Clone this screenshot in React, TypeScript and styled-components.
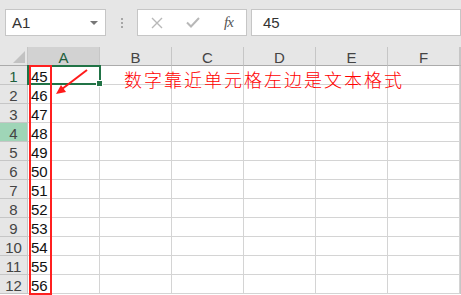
import React from 'react'
import styled, { createGlobalStyle } from 'styled-components'

const GlobalStyle = createGlobalStyle`
  html, body {
    margin: 0;
    padding: 0;
    background: #ffffff;
    overflow: hidden;
  }
  body {
    font-family: "Liberation Sans", Arial, sans-serif;
  }
`

const Page = styled.div`
  width: 461px;
  height: 295px;
  overflow: hidden;
  background: #ffffff;
`

const Toolbar = styled.div`
  height: 47px;
  box-sizing: border-box;
  padding: 9px 0 0 5px;
  background: #e6e6e6;
  display: flex;
  align-items: flex-start;
`

const Box = styled.div<{ $w?: number; $grow?: boolean }>`
  height: 27px;
  box-sizing: border-box;
  background: #ffffff;
  border: 1px solid #c6c6c6;
  display: flex;
  align-items: center;
  width: ${p => (p.$w ? `${p.$w}px` : 'auto')};
  flex: ${p => (p.$grow ? '1' : 'none')};
`

const NameText = styled.span`
  font-size: 15px;
  color: #333;
  padding-left: 6px;
  flex: 1;
`

const Caret = styled.span`
  width: 0;
  height: 0;
  border-left: 4px solid transparent;
  border-right: 4px solid transparent;
  border-top: 4px solid #777;
  margin-right: 7px;
  margin-top: 1px;
`

const Dots = styled.div`
  width: 31px;
  height: 27px;
  display: flex;
  flex-direction: column;
  align-items: center;
  justify-content: center;
  gap: 2px;

  span {
    width: 2px;
    height: 2px;
    background: #a6a6a6;
  }
`

const FxButtons = styled(Box)`
  margin-right: 4px;
  padding-left: 13px;
`

const IconSlot = styled.span<{ $w: number }>`
  width: ${p => p.$w}px;
  display: flex;
  align-items: center;
`

const Fx = styled.span`
  font-family: "Liberation Serif", serif;
  font-style: italic;
  font-size: 15px;
  color: #555;
  letter-spacing: -1px;
`

const FormulaText = styled.span`
  font-size: 15px;
  color: #333;
  padding-left: 11px;
`

const Grid = styled.div`
  position: relative;
  display: grid;
  grid-template-columns: 28px repeat(6, 72px) 1fr;
  grid-auto-rows: 19px;
`

const Corner = styled.div`
  background: #e6e6e6;
  border-right: 1px solid #c6c6c6;
  border-bottom: 1px solid #ababab;
  box-sizing: border-box;
  position: relative;

  &::after {
    content: '';
    position: absolute;
    right: 2px;
    bottom: 2px;
    width: 0;
    height: 0;
    border-left: 12px solid transparent;
    border-bottom: 12px solid #c2c2c2;
  }
`

const ColHead = styled.div<{ $active?: boolean }>`
  box-sizing: border-box;
  background: ${p => (p.$active ? '#d2d2d2' : '#e6e6e6')};
  border-right: 1px solid #c6c6c6;
  border-bottom: 1px solid #ababab;
  text-align: center;
  font-size: 15px;
  line-height: 15px;
  padding-top: 3px;
  color: ${p => (p.$active ? '#1e5e3c' : '#444')};
`

const RowHead = styled.div<{ $tone?: 'sel' | 'hover' }>`
  box-sizing: border-box;
  background: ${p => (p.$tone === 'hover' ? '#9fd5b7' : '#e6e6e6')};
  border-right: 1px solid #c6c6c6;
  border-bottom: 1px solid #c6c6c6;
  text-align: center;
  font-size: 15px;
  line-height: 15px;
  padding-top: 3px;
  color: ${p => (p.$tone === 'sel' ? '#1e5e3c' : '#444')};
`

const Cell = styled.div`
  box-sizing: border-box;
  border-right: 1px solid #d4d4d4;
  border-bottom: 1px solid #d4d4d4;
  font-size: 15px;
  line-height: 15px;
  padding: 3px 0 0 3px;
  color: #111;
  white-space: nowrap;
  position: relative;
`

const Note = styled.span`
  position: relative;
  z-index: 2;
  display: block;
  margin: 1px 0 0 21px;
  font-family: "Noto Sans CJK SC", sans-serif;
  font-weight: 300;
  font-size: 18px;
  line-height: 18px;
  letter-spacing: 2px;
  color: #ff0000;
`

const Selection = styled.div`
  position: absolute;
  left: 27px;
  top: 18px;
  width: 74px;
  height: 20px;
  box-sizing: border-box;
  border: 2px solid #217346;
  pointer-events: none;
  z-index: 3;

  &::after {
    content: '';
    position: absolute;
    right: -4px;
    bottom: -4px;
    width: 5px;
    height: 5px;
    background: #217346;
    border: 1px solid #ffffff;
  }
`

const RedFrame = styled.div`
  position: absolute;
  left: 29px;
  top: 18px;
  width: 23px;
  height: 230px;
  box-sizing: border-box;
  border: 2px solid #ff2020;
  z-index: 4;
`

const Arrow = styled.svg`
  position: absolute;
  left: 50px;
  top: 15px;
  z-index: 5;
`

const cols = ['A', 'B', 'C', 'D', 'E', 'F']
const values = [45, 46, 47, 48, 49, 50, 51, 52, 53, 54, 55, 56]

export default function App() {
  return (
    <Page>
      <GlobalStyle />
      <Toolbar>
        <Box $w={101}>
          <NameText>A1</NameText>
          <Caret />
        </Box>
        <Dots>
          <span />
          <span />
          <span />
        </Dots>
        <FxButtons $w={110}>
          <IconSlot $w={35}>
            <svg width="12" height="12" viewBox="0 0 12 12">
              <path d="M1 1 L11 11 M11 1 L1 11" stroke="#b8b8b8" strokeWidth="1.4" fill="none" />
            </svg>
          </IconSlot>
          <IconSlot $w={38}>
            <svg width="14" height="11" viewBox="0 0 14 11">
              <path d="M1 5.5 L5 9.5 L13 1" stroke="#b8b8b8" strokeWidth="2" fill="none" />
            </svg>
          </IconSlot>
          <Fx>fx</Fx>
        </FxButtons>
        <Box $grow>
          <FormulaText>45</FormulaText>
        </Box>
      </Toolbar>
      <Grid>
        <Corner />
        {cols.map(c => (
          <ColHead key={c} $active={c === 'A'}>{c}</ColHead>
        ))}
        <ColHead />
        {values.map((v, i) => (
          <React.Fragment key={v}>
            <RowHead $tone={i === 0 ? 'sel' : i === 3 ? 'hover' : undefined}>{i + 1}</RowHead>
            <Cell>{v}</Cell>
            <Cell>{i === 0 && <Note>数字靠近单元格左边是文本格式</Note>}</Cell>
            <Cell />
            <Cell />
            <Cell />
            <Cell />
            <RowHead />
          </React.Fragment>
        ))}
        <Selection />
        <RedFrame />
        <Arrow width="45" height="38" viewBox="0 0 45 38">
          <line x1="37" y1="8" x2="12" y2="27" stroke="#ff1a1a" strokeWidth="2" />
          <polygon points="6,32 16,30 11,23" fill="#ff1a1a" />
        </Arrow>
      </Grid>
    </Page>
  )
}
